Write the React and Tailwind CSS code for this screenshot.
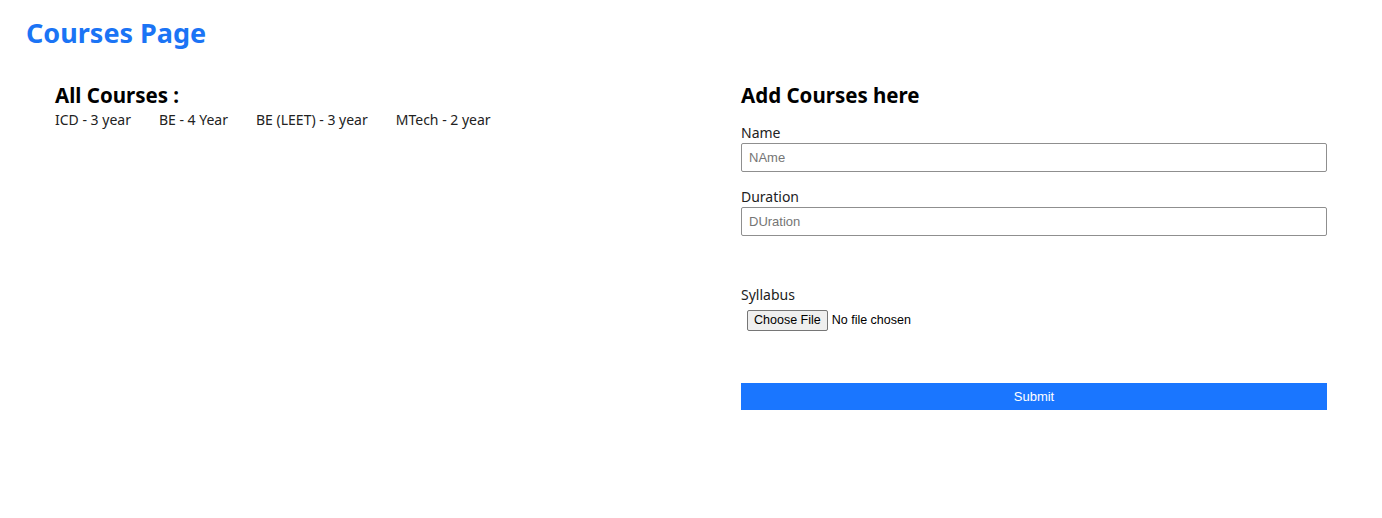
export default function App() {
  const courses = ["ICD - 3 year", "BE - 4 Year", "BE (LEET) - 3 year", "MTech - 2 year"];

  return (
    <div className="min-h-[518px] bg-white font-['Noto_Sans','Open_Sans',sans-serif] text-black">
      <h1 className="pl-[26px] pt-[14px] text-[27px] font-bold leading-[38px] text-[#1b74f5]">Courses Page</h1>

      <div className="mt-[29px] flex">
        <div className="w-[691px] pl-[55px]">
          <h2 className="text-[20.5px] font-bold leading-[28px]">All Courses :</h2>
          <div className="mt-[1px] flex gap-[28px] text-[14px] leading-[20px] text-[#222]">
            {courses.map((c) => (
              <span key={c}>{c}</span>
            ))}
          </div>
        </div>

        <div className="flex-1 pl-[50px] pr-[55px]">
          <h2 className="text-[20.5px] font-bold leading-[28px]">Add Courses here</h2>
          <form className="mt-[14px]" onSubmit={(e) => e.preventDefault()}>
            <label className="block text-[14px] leading-[20px] text-[#222]" htmlFor="name">
              Name
            </label>
            <input
              id="name"
              type="text"
              placeholder="NAme"
              className="block h-[29px] w-full rounded-[2px] border border-[#8f8f8f] px-[7px] font-['Liberation_Sans',Arial,sans-serif] text-[13px] placeholder:text-[#757575]"
            />
            <label className="mt-[15px] block text-[14px] leading-[20px] text-[#222]" htmlFor="duration">
              Duration
            </label>
            <input
              id="duration"
              type="text"
              placeholder="DUration"
              className="block h-[29px] w-full rounded-[2px] border border-[#8f8f8f] px-[7px] font-['Liberation_Sans',Arial,sans-serif] text-[13px] placeholder:text-[#757575]"
            />
            <label className="mt-[49px] block text-[14px] leading-[20px] text-[#222]" htmlFor="syllabus">
              Syllabus
            </label>
            <input
              id="syllabus"
              type="file"
              className="mt-[5px] ml-[6px] block font-['Liberation_Sans',Arial,sans-serif] text-[12.5px] leading-[19px] file:mr-[4px] file:rounded-[2px] file:border file:border-[#767676] file:bg-[#efefef] file:px-[6px] file:py-0 file:text-[12.5px] file:text-black"
            />
            <button
              type="submit"
              className="mt-[52px] block h-[27px] w-full bg-[#1a76ff] font-['Liberation_Sans',Arial,sans-serif] text-[13px] text-white"
            >
              Submit
            </button>
          </form>
        </div>
      </div>
    </div>
  );
}
